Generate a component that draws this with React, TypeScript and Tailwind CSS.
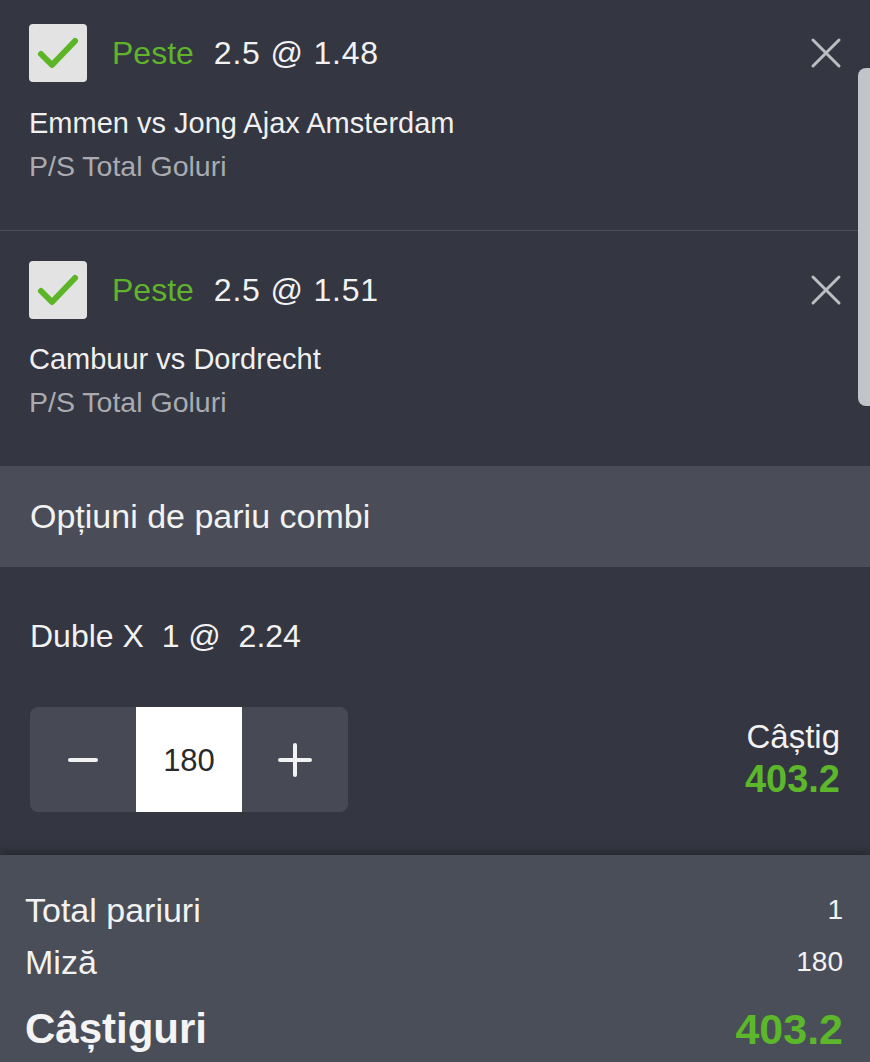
const bets = [
  {
    odds: "2.5 @ 1.48",
    match: "Emmen vs Jong Ajax Amsterdam",
    market: "P/S Total Goluri",
  },
  {
    odds: "2.5 @ 1.51",
    match: "Cambuur vs Dordrecht",
    market: "P/S Total Goluri",
  },
];

function CheckBox() {
  return (
    <div className="flex h-[58px] w-[58px] items-center justify-center rounded-[4px] bg-[#e3e3e3]">
      <svg width="58" height="58" viewBox="0 0 58 58">
        <path
          d="M12 30 L23 41 L46 17"
          fill="none"
          stroke="#5bb526"
          strokeWidth="6"
          strokeLinecap="round"
          strokeLinejoin="round"
        />
      </svg>
    </div>
  );
}

function CloseIcon() {
  return (
    <svg width="32" height="32" viewBox="0 0 32 32">
      <path
        d="M3 3 L29 29 M29 3 L3 29"
        stroke="#bdbec2"
        strokeWidth="3"
        strokeLinecap="round"
      />
    </svg>
  );
}

export default function App() {
  return (
    <div
      className="relative h-[1062px] w-[870px] overflow-hidden bg-[#343641] text-white"
      style={{ fontFamily: '"Liberation Sans", Arial, sans-serif' }}
    >
      {/* Scrollbar */}
      <div className="absolute right-0 top-[68px] h-[338px] w-[12px] rounded-l-[8px] bg-[#c2c4c9]" />

      {/* Selections */}
      {bets.map((bet, i) => (
        <div
          key={bet.match}
          className={`
            pl-[29px]
            pr-[28px]
            ${i === 0 ? "h-[231px] border-b border-[#4c4f5a] pt-[24px]" : "h-[235px] pt-[30px]"}
          `}
        >
          <div className="flex items-center">
            <CheckBox />
            <span className="ml-[25px] text-[32px] text-[#5fb42c]">Peste</span>
            <span className="ml-[20px] text-[32px] tracking-[0.8px] text-[#f2f2f2]">{bet.odds}</span>
            <div className="ml-auto">
              <CloseIcon />
            </div>
          </div>
          <p
            className={`
              ${i === 0 ? "mt-[20px]" : "mt-[19px]"}
              text-[29px]
              leading-[43px]
              text-[#f0f0f0]
            `}
          >
            {bet.match}
          </p>
          <p className="text-[28.5px] leading-[43px] text-[#a9abb0]">{bet.market}</p>
        </div>
      ))}

      {/* Combi header */}
      <div className="flex h-[101px] items-center bg-[#4a4d58] px-[30px]">
        <span className="text-[34px] text-[#f2f2f2]">Opțiuni de pariu combi</span>
      </div>

      {/* Combi */}
      <div className="h-[288px] px-[30px] pt-[50px]">
        <p className="text-[32px] leading-[38px] text-[#f2f2f2]">
          Duble X&nbsp;&nbsp;1 @&nbsp;&nbsp;2.24
        </p>

        <div className="mt-[52px] flex items-center justify-between">
          <div className="flex h-[105px] w-[318px] overflow-hidden rounded-[8px] bg-[#474a55]">
            <div className="flex w-[106px] items-center justify-center">
              <div className="h-[4px] w-[30px] rounded bg-[#f2f2f2]" />
            </div>
            <div className="flex w-[106px] items-center justify-center bg-white pt-[4px] text-[31px] text-[#2a2a2a]">
              180
            </div>
            <div className="flex w-[106px] items-center justify-center">
              <svg width="34" height="34" viewBox="0 0 34 34">
                <path
                  d="M17 2 V32 M2 17 H32"
                  stroke="#f2f2f2"
                  strokeWidth="4"
                  strokeLinecap="round"
                />
              </svg>
            </div>
          </div>

          <div className="-mt-[1px] text-right">
            <p className="text-[33px] leading-[40px] text-[#f2f2f2]">Câștig</p>
            <p className="text-[38px] font-bold leading-[44px] text-[#5cb82a]">403.2</p>
          </div>
        </div>
      </div>

      {/* Summary */}
      <div className="h-[207px] bg-[#4a4e58] pl-[25px] pr-[27px] pt-[35px] shadow-[0_-4px_8px_rgba(0,0,0,0.25)]">
        <div className="flex items-center justify-between">
          <span className="text-[34px] leading-[40px] text-[#f2f2f2]">Total pariuri</span>
          <span className="text-[28px] leading-[40px] text-[#f2f2f2]">1</span>
        </div>
        <div className="mt-[12px] flex items-center justify-between">
          <span className="text-[34px] leading-[40px] text-[#f2f2f2]">Miză</span>
          <span className="text-[28px] leading-[40px] text-[#f2f2f2]">180</span>
        </div>
        <div className="mt-[22px] flex items-center justify-between">
          <span className="text-[42px] font-bold leading-[50px] text-[#f4f4f4]">Câștiguri</span>
          <span className="text-[43px] font-bold leading-[50px] text-[#5cb82a]">403.2</span>
        </div>
      </div>
    </div>
  );
}
